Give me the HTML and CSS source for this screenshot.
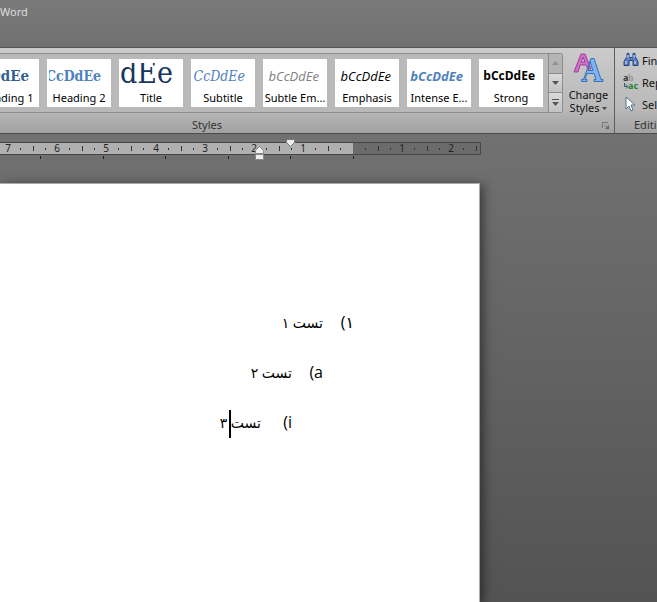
FILE: index.html
```
<!DOCTYPE html>
<html lang="en">
<head>
    <meta charset="UTF-8">
    <meta name="viewport" content="width=device-width, initial-scale=1.0">
    <title>Word</title>
    <link rel="stylesheet" href="styles.css">
</head>
<body>
    <header class="title-bar">Word</header>

    <div class="ribbon">
        <section class="group styles-group">
            <div class="group-body">
                <div class="gallery">
                    <div class="gallery-items">
                        <button class="style-item"><span class="preview heading-1">CcDdEe</span><span class="style-name">Heading 1</span></button>
                        <button class="style-item"><span class="preview heading-2">CcDdEe</span><span class="style-name">Heading 2</span></button>
                        <button class="style-item"><span class="preview title">dEe</span><span class="style-name">Title</span></button>
                        <button class="style-item"><span class="preview subtitle">CcDdEe</span><span class="style-name">Subtitle</span></button>
                        <button class="style-item"><span class="preview subtle">bCcDdEe</span><span class="style-name">Subtle Em...</span></button>
                        <button class="style-item"><span class="preview emphasis">bCcDdEe</span><span class="style-name">Emphasis</span></button>
                        <button class="style-item"><span class="preview intense">bCcDdEe</span><span class="style-name">Intense E...</span></button>
                        <button class="style-item"><span class="preview strong">bCcDdEe</span><span class="style-name">Strong</span></button>
                    </div>
                    <div class="gallery-scroll">
                        <button class="off" aria-label="Row up"><svg width="7" height="4"><path d="M0 4L3.500 0L7 4z" fill="#929292"/></svg></button>
                        <button aria-label="Row down"><svg width="7" height="4"><path d="M0 0h7L3.500 4z" fill="#555"/></svg></button>
                        <button aria-label="More"><svg width="7" height="7"><path d="M0 0h7v1H0zM0 3h7L3.500 7z" fill="#555"/></svg></button>
                    </div>
                </div>
                <button class="change-styles">
                    <svg width="32" height="30" viewBox="0 0 32 30">
                        <path d="M1 19L8 1h4l6 15h-3l-2-4H7l-2 7zM8 9h4l-2-5z" fill="#d070c8" stroke="#a03c9f"/>
                        <path d="M8.500 28.500v-2h2L18 5.500h3l7 21h2v2h-9v-2h2l-2-6h-7l-2 6h2v2zM15 17.500h5l-3-9z" fill="#7db5ee" stroke="#3a6fbd"/>
                    </svg>
                    <span>Change</span>
                    <span>Styles <svg width="5" height="4"><path d="M0 0h5L2.500 3z" fill="#444"/></svg></span>
                </button>
            </div>
            <div class="caption">
                <span>Styles</span>
                <button class="launcher" aria-label="Styles window"><svg width="8" height="8"><path d="M0.500 6V0.500H6M3 3l3 3" fill="none" stroke="#777"/><path d="M7 3v4H3z" fill="#666"/></svg></button>
            </div>
        </section>

        <section class="group editing-group">
            <div class="editing-list">
                <button>
                    <svg width="16" height="16" viewBox="0 0 16 16">
                        <path d="M4 1.500h2v4h4v-4h2v3l3 5v4h-5v-5H6v5H1v-4l3-5z" fill="#5b7fc0" stroke="#24427f"/>
                        <path d="M3 9v3M12 9v3M5 3v3M11 3v3" stroke="#dbe8ff"/>
                    </svg>Find
                </button>
                <button>
                    <svg class="replace-icon" width="16" height="16" viewBox="0 0 16 16">
                        <text x="0" y="7" fill="#333">a</text><text x="5" y="7" fill="#999">b</text>
                        <text x="5" y="15" fill="#24852c">ac</text>
                        <path d="M1.500 9v3.500H4M3 10.500l2 2-2 2" fill="none" stroke="#345487"/>
                    </svg>Replace
                </button>
                <button>
                    <svg width="16" height="16" viewBox="0 0 16 16"><path d="M3 1l9 8H8l2 5-2 1-2-5-3 3z" fill="#fff" stroke="#55708f"/></svg>Select
                </button>
            </div>
            <div class="caption">Editing</div>
        </section>
    </div>

    <main class="workspace">
        <svg class="ruler" width="481" height="24" viewBox="0 0 481 24">
            <path d="M0 5h353v12H0z" fill="#b0b0b0"/>
            <path d="M353 5h127v12H353z" fill="#6b6b6b"/>
            <path d="M0 4.500h480.500v12H0" fill="none" stroke="#464646"/>
            <!-- quarter marks -->
            <path d="M20.500 10v2m25-2v2m24-2v2m25-2v2m24-2v2m25-2v2m25-2v2m25-2v2m24-2v2m25-2v2m24-2v2m25-2v2m24-2v2m25-2v2m25-2v2m25-2v2m24-2v2m25-2v2m24-2v2" stroke="#333"/>
            <!-- half marks -->
            <path d="M33.500 8v5m49-5v5m49-5v5m50-5v5m49-5v5m49-5v5m49-5v5m50-5v5m49-5v5m49-5v5" stroke="#333"/>
            <!-- tab stops -->
            <path d="M40.500 18v3m63-3v3m62-3v3m63-3v3m62-3v3m63-3v3" stroke="#222"/>
            <g class="numbers">
                <text x="8" y="14">7</text><text x="57" y="14">6</text><text x="106" y="14">5</text>
                <text x="156" y="14">4</text><text x="205" y="14">3</text><text x="254" y="14">2</text>
                <text x="303" y="14">1</text><text x="402" y="14">1</text><text x="451" y="14">2</text>
            </g>
            <path d="M286.500 1.500h8v3l-4 4-4-4z" fill="#eee" stroke="#777"/>
            <path d="M255.500 15.500v-3l4-4 4 4v3zM255.500 16.500h8v5h-8z" fill="#eee" stroke="#888"/>
        </svg>

        <article class="page" dir="rtl" lang="fa">
            <ol>
                <li><span class="marker">۱)</span>تست ۱</li>
                <li class="level-2"><span class="marker">a)</span>تست ۲</li>
                <li class="level-3"><span class="marker">i)</span>تست<span class="caret"></span> ۳</li>
            </ol>
        </article>
    </main>
</body>
</html>
```
FILE: styles.css
```
* {
    box-sizing: border-box;
}
body {
    margin: 0;
    min-height: 100vh;
    display: flex;
    flex-direction: column;
    overflow: hidden;
    font-family: "Noto Sans", "Open Sans", sans-serif;
    font-size: 11px;
    color: #111;
    background: linear-gradient(#7a7a7a, #707070 48px, #717171 134px, #535353);
}
button {
    border: 0;
    padding: 0;
    background: none;
    font: inherit;
    color: inherit;
}
.title-bar {
    height: 47px;
    padding-top: 4px;
    line-height: 16px;
    color: #dedede;
}
.ribbon {
    display: flex;
    height: 87px;
    border-top: 1px solid #555;
    border-bottom: 1px solid #4c4c4c;
    background: linear-gradient(#cbcbcb, #b9b9b9 60px, #a2a2a2);
}
.group {
    display: flex;
    flex-direction: column;
}
.styles-group {
    flex: 1;
    min-width: 0;
    border-right: 1px solid #5e5e5e;
}
.group-body {
    display: flex;
    justify-content: flex-end;
    height: 70px;
    padding-top: 5px;
}
.gallery {
    display: flex;
    flex: 1;
    min-width: 0;
    height: 60px;
    border: 1px solid #8c8c8c;
    border-left: 0;
    border-radius: 0 3px 3px 0;
    background: #b9b9b9;
}
.gallery-items {
    display: flex;
    flex: 1;
    justify-content: flex-end;
    gap: 8px;
    min-width: 0;
    padding: 5px 5px 0 0;
    overflow: hidden;
}
.style-item {
    display: flex;
    flex: none;
    flex-direction: column;
    width: 64px;
    height: 48px;
    background: #fff;
    color: #000;
    overflow: hidden;
}
.preview {
    display: flex;
    justify-content: flex-end;
    align-items: center;
    width: 60px;
    height: 26px;
    margin: 4px 0 0 2px;
    padding-right: 6px;
    overflow: hidden;
    font-family: "Open Sans", sans-serif;
    font-size: 13px;
    line-height: 24px;
    white-space: nowrap;
}
.heading-1, .heading-2, .title, .subtitle {
    padding-right: 8px;
    font-family: "DejaVu Serif Condensed", "DejaVu Serif", serif;
}
.heading-1 {
    font-size: 15px;
    font-weight: bold;
    color: #365f91;
}
.heading-2 {
    font-size: 14px;
    font-weight: bold;
    color: #4f81bd;
}
.title {
    font-size: 30px;
    line-height: 20px;
    align-items: flex-start;
    color: #17365d;
}
.subtitle {
    font-size: 14px;
    font-style: italic;
    color: #4f81bd;
}
.subtle {
    font-style: italic;
    color: #808080;
}
.emphasis {
    font-style: italic;
}
.intense {
    font-style: italic;
    font-weight: bold;
    color: #4f81bd;
}
.strong {
    font-size: 12px;
    font-weight: bold;
}
.style-name {
    width: 100%;
    line-height: 18px;
    text-align: center;
    white-space: nowrap;
}
.gallery-scroll {
    display: flex;
    flex-direction: column;
    width: 14px;
    border-left: 1px solid #8c8c8c;
}
.gallery-scroll button {
    display: flex;
    flex: 1;
    align-items: center;
    justify-content: center;
    border-top: 1px solid #8c8c8c;
    background: linear-gradient(#dadada, #c2c2c2);
}
.gallery-scroll .off {
    border-top: 0;
    background: #b4b4b4;
}
.change-styles {
    display: flex;
    flex-direction: column;
    align-items: center;
    width: 51px;
    line-height: 13px;
}
.change-styles > svg {
    margin-bottom: 5px;
}
.change-styles span svg {
    vertical-align: middle;
}
.caption {
    position: relative;
    line-height: 14px;
    color: #333;
}
.styles-group .caption {
    padding-right: 200px;
    text-align: center;
}
.launcher {
    position: absolute;
    right: 4px;
    top: 4px;
    line-height: 0;
}
.editing-group {
    width: 42px;
    padding-left: 8px;
    overflow: hidden;
}
.editing-list {
    height: 70px;
    padding-top: 1px;
}
.editing-list button {
    display: flex;
    align-items: center;
    gap: 3px;
    height: 22px;
}
.editing-list svg {
    flex: none;
}
.replace-icon {
    font-size: 9px;
    font-weight: bold;
}
.editing-group .caption {
    padding-left: 11px;
}
.workspace {
    display: flex;
    flex: 1;
    flex-direction: column;
    margin-right: 176px;
    padding-top: 4px;
}
.ruler {
    flex: none;
    align-self: flex-end;
}
.numbers {
    font-size: 10px;
    text-anchor: middle;
    fill: #222;
}
.page {
    flex: 1;
    margin: 21px 1px 0 0;
    padding: 113px 125px 0 0;
    border-top: 1px solid #aaa;
    border-right: 1px solid #aaa;
    background: #fff;
    box-shadow: 3px 2px 10px rgba(0,0,0,0.5);
    color: #000;
    font-family: "Open Sans", "DejaVu Sans", sans-serif;
    font-size: 14px;
}
.page ol {
    margin: 0;
    padding: 0;
    list-style: none;
}
.page li {
    height: 50px;
    line-height: 50px;
    white-space: nowrap;
}
.page .level-2 {
    padding-right: 31px;
}
.page .level-3 {
    padding-right: 62px;
}
.marker {
    display: inline-block;
    width: 31px;
    font-size: 16px;
}
.caret {
    display: inline-block;
    width: 2px;
    height: 28px;
    margin-left: -2px;
    background: #000;
    vertical-align: middle;
}
```
